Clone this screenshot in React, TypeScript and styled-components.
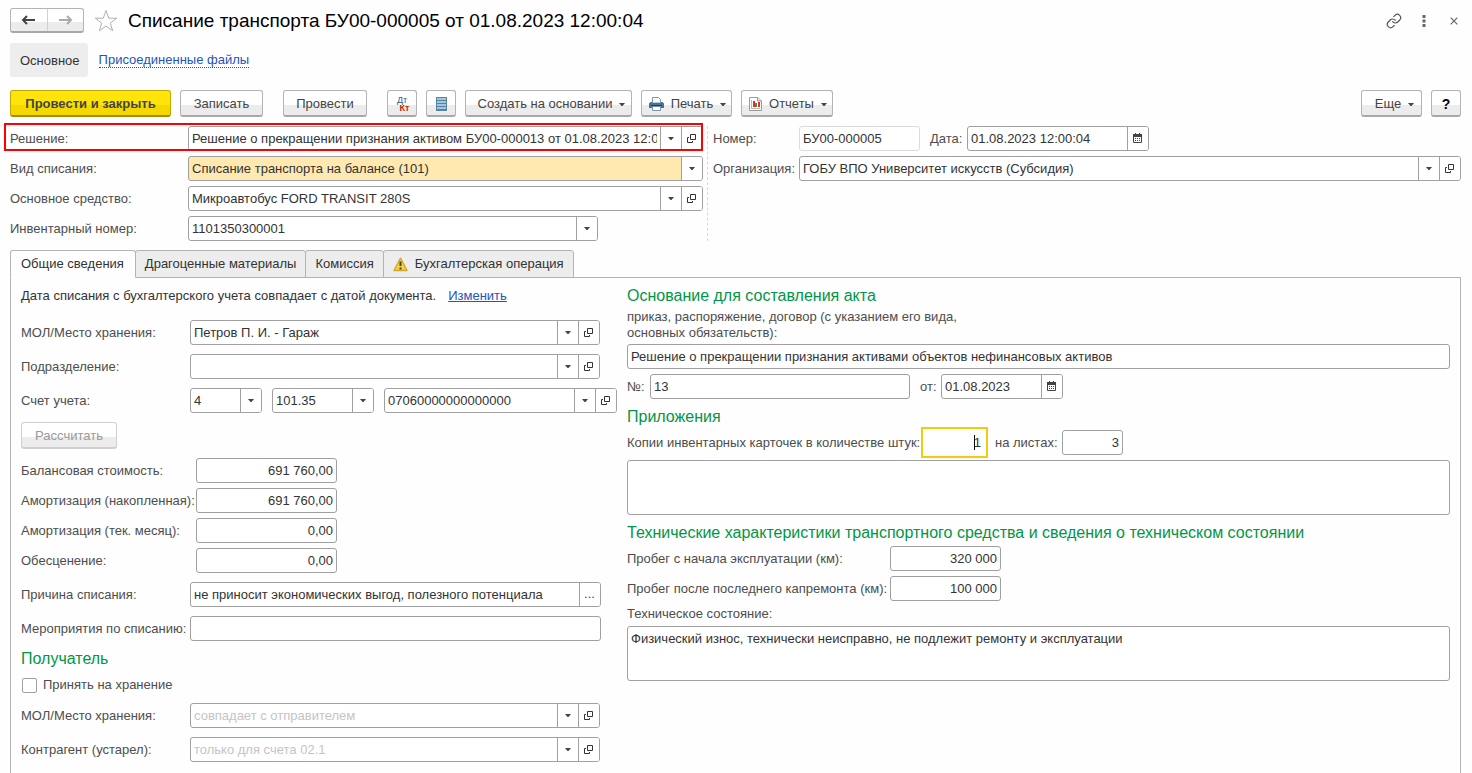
import React from "react";
import styled, { createGlobalStyle, css } from "styled-components";

const GlobalStyle = createGlobalStyle`
  * { box-sizing: border-box; }
  body {
    margin: 0;
    background: #fefefe;
    color: #4d4d4d;
    font: 13px/16px "Liberation Sans", Arial, sans-serif;
  }
  button, input, select, textarea { font: inherit; margin: 0; }
`;

const Page = styled.div`
  display: flex;
  flex-direction: column;
  height: 100vh;
  padding: 8px 11px 0 10px;
  overflow: hidden;
`;

/* ---------- title bar ---------- */

const TitleBar = styled.header`
  display: flex;
  align-items: center;
  height: 25px;
`;

const raised = css`
  border: 1px solid #b3b3b3;
  border-bottom: 2px solid #a8a8a8;
  border-radius: 3px;
  background: linear-gradient(#fff 0 60%, #ececec 60% 100%);
`;

const History = styled.nav`
  ${raised}
  display: flex;
  width: 74px;
  height: 25px;
`;

const HistoryButton = styled.button`
  flex: 1;
  display: flex;
  align-items: center;
  justify-content: center;
  padding: 0;
  border: 0;
  background: none;
  & + & { border-left: 1px solid #d0d0d0; }
`;

const Title = styled.h1`
  flex: 1;
  margin: 0;
  color: #000;
  font-size: 19px;
  line-height: 24px;
  font-weight: 400;
  white-space: nowrap;
`;

const IconButton = styled.button`
  display: flex;
  align-items: center;
  justify-content: center;
  padding: 0;
  border: 0;
  background: none;
`;

const StarButton = styled(IconButton)`
  width: 24px;
  margin: 0 10px;
`;

const WindowActions = styled.div`
  display: flex;
  gap: 10px;
  margin-right: -3px;
  & > button { width: 20px; height: 20px; }
`;

/* ---------- page links ---------- */

const Sections = styled.nav`
  display: flex;
  align-items: center;
  gap: 11px;
  height: 34px;
  margin-top: 10px;
`;

const CurrentSection = styled.span`
  padding: 10px 8px 8px 10px;
  border-radius: 3px;
  background: #ededed;
  color: #333;
`;

const Link = styled.a`
  color: #2454b8;
  text-decoration: underline;
`;

const SectionLink = styled(Link)`
  line-height: 14px;
  text-decoration: none;
  border-bottom: 1px dotted #2454b8;
`;

/* ---------- command bar ---------- */

const Toolbar = styled.div`
  display: flex;
  gap: 9px;
  margin-top: 13px;
`;

const Group = styled.div<{ $end?: boolean }>`
  display: flex;
  gap: 9px;
  margin-right: 11px;
  ${(p) => p.$end && "margin: 0 0 0 auto;"}
`;

const Button = styled.button<{ $primary?: boolean; $menu?: boolean; $width?: number }>`
  ${raised}
  display: flex;
  align-items: center;
  justify-content: center;
  gap: 7px;
  width: ${(p) => (p.$width ? p.$width + "px" : "auto")};
  height: 27px;
  padding: ${(p) => (p.$menu ? "2px 0 0 6px" : "2px 0 0")};
  color: #444;
  white-space: nowrap;
  &:disabled {
    color: #999;
    border-color: #d0d0d0;
  }
  ${(p) =>
    p.$primary &&
    css`
      border-color: #c0a800;
      border-bottom-color: #a08c00;
      background: linear-gradient(#ffe40a 0 60%, #f5d800 60% 100%);
      font-weight: 700;
    `}
`;

const IconMenuButton = styled(Button)`
  padding-left: 2px;
`;

const HelpButton = styled(Button)`
  color: #000;
  font-size: 14px;
  font-weight: 700;
`;

/* ---------- fields ---------- */

const Label = styled.label<{ $width?: number }>`
  flex: none;
  width: ${(p) => (p.$width ? p.$width + "px" : "auto")};
  white-space: nowrap;
`;

const Frame = styled.div<{ $width?: number; $tint?: boolean; $quiet?: boolean }>`
  display: flex;
  flex: ${(p) => (p.$width ? "none" : "1 1 0")};
  width: ${(p) => (p.$width ? p.$width + "px" : "auto")};
  min-width: 0;
  height: 25px;
  border: 1px solid ${(p) => (p.$quiet ? "#dcdcdc" : "#a0a0a0")};
  border-radius: 3px;
  background: ${(p) => (p.$tint ? "#ffe9b0" : "#fff")};
  overflow: hidden;
`;

const control = css`
  flex: 1 1 0;
  width: 0;
  min-width: 0;
  padding: 0 3px;
  border: 0;
  outline: 0;
  background: none;
  color: #333;
`;

const Input = styled.input<{ $right?: boolean }>`
  ${control}
  text-align: ${(p) => (p.$right ? "right" : "left")};
  &::placeholder { color: #c4c4c4; opacity: 1; }
`;

const Select = styled.select`
  ${control}
  appearance: none;
`;

const cell = css`
  display: flex;
  flex: none;
  align-items: center;
  justify-content: center;
  width: 21px;
  padding: 0 1px 1px 0;
  border: 0;
  border-left: 1px solid #a0a0a0;
  background: #fff;
  color: #444;
`;

const CellButton = styled.button`${cell}`;
const SelectMark = styled.span`
  ${cell}
  pointer-events: none;
`;

const TextArea = styled.textarea`
  display: block;
  width: 100%;
  height: 55px;
  padding: 4px 3px;
  border: 1px solid #a0a0a0;
  border-radius: 3px;
  outline: 0;
  background: #fff;
  color: #333;
  resize: none;
`;

/* ---------- document header ---------- */

const DocHeader = styled.section`
  display: flex;
  margin-top: 9px;
`;

const Column = styled.div<{ $gap: number }>`
  display: flex;
  flex-direction: column;
  gap: ${(p) => p.$gap}px;
`;

const HeaderMain = styled(Column)`
  flex: 0 1 693px;
  min-width: 0;
`;

const HeaderSide = styled(Column)`
  flex: 1 1 0;
  min-width: 0;
  margin-left: 4px;
  padding-left: 5px;
  border-left: 1px dashed #d8d8d8;
`;

const Row = styled.div`
  position: relative;
  display: flex;
  align-items: center;
  height: 25px;
`;

const Highlight = styled.div`
  position: absolute;
  inset: -3px 0 0 -6px;
  border: 2px solid #f00;
  pointer-events: none;
`;

/* ---------- tabs ---------- */

const Tabs = styled.div`
  display: flex;
  margin-top: 9px;
`;

const Tab = styled.button<{ $active?: boolean }>`
  display: flex;
  align-items: center;
  gap: 7px;
  height: 28px;
  margin: 0 0 0 -1px;
  padding: 0 9px;
  border: 1px solid #b3b3b3;
  border-radius: 3px 3px 0 0;
  background: #ededed;
  color: #333;
  white-space: nowrap;
  &:first-child {
    margin-left: 0;
    padding: 0 11px 0 10px;
  }
  ${(p) =>
    p.$active &&
    css`
      position: relative;
      background: #fefefe;
      border-bottom-color: #fefefe;
    `}
`;

const Panel = styled.section`
  display: flex;
  flex: 1 0 auto;
  gap: 10px;
  margin-top: -1px;
  padding: 10px;
  border: 1px solid #b3b3b3;
  border-bottom: 0;
`;

const Left = styled.div`
  flex: none;
  width: 596px;
`;

const Right = styled.div`
  flex: 1 1 0;
  min-width: 0;
`;

const Notice = styled.p`
  display: flex;
  gap: 12px;
  height: 16px;
  margin: 0 0 16px;
  color: #333;
`;

const Heading = styled.h2`
  margin: 0;
  color: #009646;
  font-size: 16px;
  line-height: 16px;
  font-weight: 400;
`;

const Block = styled(Column)<{ $top: number }>`
  margin-top: ${(p) => p.$top}px;
`;

const Calculate = styled.div`
  margin: 9px 0;
`;

const CheckLine = styled.label`
  display: flex;
  align-items: center;
  gap: 6px;
  margin: 10px 1px;
`;

const Checkbox = styled.input`
  appearance: none;
  width: 15px;
  height: 15px;
  border: 1px solid #a0a0a0;
  border-radius: 2px;
  background: #fff;
`;

const Hint = styled.label`
  display: block;
  width: 360px;
  margin: 5px 0 3px;
`;

const StateLabel = styled.label`
  display: block;
  margin: 5px 0 4px;
`;

const ActiveFrame = styled(Frame)`
  position: relative;
  height: 31px;
  padding-right: 2px;
  border: 2px solid #f2cc0c;
  border-radius: 0;
`;

const Caret = styled.span`
  position: absolute;
  top: 6px;
  right: 11px;
  width: 1px;
  height: 15px;
  background: #000;
`;

const Spacer = styled.span<{ $width: number }>`
  flex: none;
  width: ${(p) => p.$width}px;
`;

/* ---------- icons ---------- */

const Triangle = () => (
  <svg width="6" height="3" viewBox="0 0 6 3" aria-hidden="true">
    <path d="M0 0h6L3.500 3h-1z" fill="#444" />
  </svg>
);

const OpenIcon = () => (
  <svg width="11" height="11" viewBox="0 0 11 11" fill="none" stroke="#333" aria-hidden="true">
    <path d="M4.500 1.500h5v5h-5zM3 4.500H1.500v5h5V8" />
  </svg>
);

const CalendarIcon = () => (
  <svg width="10" height="10" viewBox="0 0 10 10" aria-hidden="true">
    <path d="M.5 1.500h8v8h-8z" fill="#fff" stroke="#444" />
    <path d="M0 1h9v3H0zM2 0h1v1H2zM6 0h1v1H6z" fill="#444" />
    <path d="M2 5h1v1H2zM4 5h1v1H4zM6 5h1v1H6zM2 7h1v1H2zM4 7h1v1H4zM6 7h1v1H6z" fill="#444" />
  </svg>
);

const Arrow = ({ back }: { back?: boolean }) => (
  <svg width="15" height="10" viewBox="0 0 15 10" fill="none" stroke={back ? "#444" : "#aaa"} strokeWidth="2" aria-hidden="true">
    <path d={back ? "M14 5H2M6 1L2 5l4 4" : "M1 5h12M9 1l4 4-4 4"} />
  </svg>
);

const Star = () => (
  <svg width="24" height="23" viewBox="0 0 24 23" fill="none" stroke="#b0b0b0" aria-hidden="true">
    <path d="M12 1.500l2.700 7.700h8l-6.400 4.900 2.400 7.700-6.700-4.700-6.700 4.700 2.400-7.700-6.400-4.900h8z" />
  </svg>
);

const LinkIcon = () => (
  <svg width="16" height="16" viewBox="0 0 24 24" fill="none" stroke="#555" strokeWidth="1.800" strokeLinecap="round" aria-hidden="true">
    <path d="M10 13a5 5 0 0 0 7.540.540l3-3a5 5 0 0 0-7.070-7.070l-1.720 1.710" />
    <path d="M14 11a5 5 0 0 0-7.540-.540l-3 3a5 5 0 0 0 7.070 7.070l1.710-1.710" />
  </svg>
);

const DotsIcon = () => (
  <svg width="4" height="12" viewBox="0 0 4 12" fill="#666" aria-hidden="true">
    <path d="M.5 0h3v3h-3zM.5 4.500h3v3h-3zM.5 9h3v3h-3z" />
  </svg>
);

const CloseIcon = () => (
  <svg width="8" height="8" viewBox="0 0 8 8" stroke="#666" strokeWidth="1.200" aria-hidden="true">
    <path d="M.7.700l6.600 6.600M7.300.700L.7 7.300" />
  </svg>
);

const DebitMark = styled.span`
  display: flex;
  flex-direction: column;
  width: 15px;
  font-size: 9px;
  line-height: 8px;
  color: #1f618f;
  & > b { align-self: flex-end; color: #c81e0a; }
`;

const ListIcon = () => (
  <svg width="11" height="14" viewBox="0 0 11 14" aria-hidden="true">
    <path d="M0 0h11v14H0z" fill="#5583a0" />
    <path d="M1 1h9v2H1zM1 4h9v2H1zM1 7h9v2H1zM1 10h9v2H1z" fill="#a3c6dc" />
  </svg>
);

const PrinterIcon = () => (
  <svg width="15" height="14" viewBox="0 0 15 14" aria-hidden="true">
    <path d="M3.500.5h6l2 2V6h-8z" fill="#fff" stroke="#7d95a8" />
    <path d="M1.500 5H3v1h9V5h1.500L15 6.500V11H0V6.500z" fill="#47729c" />
    <path d="M2 8h11v1H2z" fill="#1f3d5c" />
    <path d="M3.500 9.500h8v4h-8z" fill="#fff" stroke="#7d95a8" />
  </svg>
);

const ReportIcon = () => (
  <svg width="13" height="14" viewBox="0 0 13 14" aria-hidden="true">
    <path d="M.5.5h8.500l3.500 3.500v9.500H.5z" fill="#fff" stroke="#9a9a9a" />
    <path d="M8.500.5V4h4" fill="#ddd" stroke="#9a9a9a" />
    <path d="M2 3h1v8h8v1H2z" fill="#bbb" />
    <path d="M4 4h2v6H4z" fill="#e03020" />
    <path d="M6 6h2v4H6z" fill="#2c9a3c" />
    <path d="M9 5h2v5H9z" fill="#e03020" />
  </svg>
);

const WarningIcon = () => (
  <svg width="15" height="15" viewBox="0 0 15 15" aria-hidden="true">
    <path d="M7.500 1L14 13.500H1z" fill="#f8d040" stroke="#d4a72c" strokeLinejoin="round" strokeWidth="1.400" />
    <path d="M6.500 4.500h2V9h-2zM6.500 10.500h2v2h-2z" fill="#444" />
  </svg>
);

/* ---------- field composites ---------- */

type FieldProps = {
  id: string;
  value?: string;
  placeholder?: string;
  width?: number;
  open?: boolean;
};

const Combo = ({ id, value = "", placeholder, width, open }: FieldProps) => (
  <Frame $width={width}>
    <Input id={id} defaultValue={value} placeholder={placeholder} />
    <CellButton type="button" aria-label="Выбрать из списка"><Triangle /></CellButton>
    {open && <CellButton type="button" aria-label="Открыть"><OpenIcon /></CellButton>}
  </Frame>
);

const Choice = ({ id, value, width, tint, label }: FieldProps & { tint?: boolean; label?: string }) => (
  <Frame $width={width} $tint={tint}>
    <Select id={id} defaultValue={value} aria-label={label}>
      <option>{value}</option>
    </Select>
    <SelectMark><Triangle /></SelectMark>
  </Frame>
);

const DateField = ({ id, value, width }: FieldProps) => (
  <Frame $width={width}>
    <Input id={id} defaultValue={value} />
    <CellButton type="button" aria-label="Календарь"><CalendarIcon /></CellButton>
  </Frame>
);

const NumberField = ({ id, value, width }: FieldProps) => (
  <Frame $width={width}>
    <Input id={id} defaultValue={value} $right />
  </Frame>
);

const amounts = [
  ["balance", "Балансовая стоимость:", "691 760,00"],
  ["depreciation", "Амортизация (накопленная):", "691 760,00"],
  ["depreciation-month", "Амортизация (тек. месяц):", "0,00"],
  ["impairment", "Обесценение:", "0,00"],
];

export default function App() {
  return (
    <Page>
      <GlobalStyle />
      <TitleBar>
        <History>
          <HistoryButton type="button" aria-label="Назад"><Arrow back /></HistoryButton>
          <HistoryButton type="button" aria-label="Вперед"><Arrow /></HistoryButton>
        </History>
        <StarButton type="button" aria-label="Избранное"><Star /></StarButton>
        <Title>Списание транспорта БУ00-000005 от 01.08.2023 12:00:04</Title>
        <WindowActions>
          <IconButton type="button" aria-label="Ссылка"><LinkIcon /></IconButton>
          <IconButton type="button" aria-label="Меню"><DotsIcon /></IconButton>
          <IconButton type="button" aria-label="Закрыть"><CloseIcon /></IconButton>
        </WindowActions>
      </TitleBar>

      <Sections>
        <CurrentSection>Основное</CurrentSection>
        <SectionLink href="#files">Присоединенные файлы</SectionLink>
      </Sections>

      <Toolbar>
        <Group>
          <Button type="button" $primary $width={161}>Провести и закрыть</Button>
          <Button type="button" $width={83}>Записать</Button>
        </Group>
        <Group>
          <Button type="button" $width={84}>Провести</Button>
        </Group>
        <Button type="button" $width={30} aria-label="Проводки">
          <DebitMark>Дт<b>Кт</b></DebitMark>
        </Button>
        <Button type="button" $width={30} aria-label="Список"><ListIcon /></Button>
        <Button type="button" $menu $width={167}>Создать на основании<Triangle /></Button>
        <IconMenuButton type="button" $width={91}><PrinterIcon />Печать<Triangle /></IconMenuButton>
        <IconMenuButton type="button" $width={92}><ReportIcon />Отчеты<Triangle /></IconMenuButton>
        <Group $end>
          <Button type="button" $menu $width={61}>Еще<Triangle /></Button>
          <HelpButton type="button" $width={30}>?</HelpButton>
        </Group>
      </Toolbar>

      <DocHeader>
        <HeaderMain $gap={5}>
          <Row>
            <Label htmlFor="decision" $width={178}>Решение:</Label>
            <Combo id="decision" value="Решение о прекращении признания активом БУ00-000013 от 01.08.2023 12:00:00" open />
            <Highlight />
          </Row>
          <Row>
            <Label htmlFor="kind" $width={178}>Вид списания:</Label>
            <Choice id="kind" value="Списание транспорта на балансе (101)" tint />
          </Row>
          <Row>
            <Label htmlFor="asset" $width={178}>Основное средство:</Label>
            <Combo id="asset" value="Микроавтобус FORD TRANSIT 280S" open />
          </Row>
          <Row>
            <Label htmlFor="inventory" $width={178}>Инвентарный номер:</Label>
            <Combo id="inventory" value="1101350300001" width={410} />
          </Row>
        </HeaderMain>
        <HeaderSide $gap={5}>
          <Row>
            <Label htmlFor="number" $width={86}>Номер:</Label>
            <Frame $width={121} $quiet><Input id="number" defaultValue="БУ00-000005" readOnly /></Frame>
            <Spacer $width={10} />
            <Label htmlFor="date" $width={37}>Дата:</Label>
            <DateField id="date" value="01.08.2023 12:00:04" width={182} />
          </Row>
          <Row>
            <Label htmlFor="org" $width={86}>Организация:</Label>
            <Combo id="org" value="ГОБУ ВПО Университет искусств (Субсидия)" open />
          </Row>
        </HeaderSide>
      </DocHeader>

      <Tabs role="tablist">
        <Tab type="button" role="tab" aria-selected $active>Общие сведения</Tab>
        <Tab type="button" role="tab">Драгоценные материалы</Tab>
        <Tab type="button" role="tab">Комиссия</Tab>
        <Tab type="button" role="tab"><WarningIcon />Бухгалтерская операция</Tab>
      </Tabs>

      <Panel>
        <Left>
          <Notice>
            Дата списания с бухгалтерского учета совпадает с датой документа.
            <Link href="#change">Изменить</Link>
          </Notice>
          <Column $gap={9}>
            <Row>
              <Label htmlFor="keeper" $width={169}>МОЛ/Место хранения:</Label>
              <Combo id="keeper" value="Петров П. И. - Гараж" width={410} open />
            </Row>
            <Row>
              <Label htmlFor="department" $width={169}>Подразделение:</Label>
              <Combo id="department" width={410} open />
            </Row>
            <Row>
              <Label htmlFor="account-kind" $width={169}>Счет учета:</Label>
              <Choice id="account-kind" value="4" width={72} />
              <Spacer $width={10} />
              <Choice id="account" value="101.35" width={102} label="Счет" />
              <Spacer $width={10} />
              <Combo id="classifier" value="07060000000000000" width={233} open />
            </Row>
          </Column>
          <Calculate>
            <Button type="button" disabled $width={96}>Рассчитать</Button>
          </Calculate>
          <Column $gap={5}>
            {amounts.map(([id, label, value]) => (
              <Row key={id}>
                <Label htmlFor={id} $width={175}>{label}</Label>
                <NumberField id={id} value={value} width={141} />
              </Row>
            ))}
          </Column>
          <Block $gap={9} $top={9}>
            <Row>
              <Label htmlFor="reason" $width={169}>Причина списания:</Label>
              <Frame $width={411}>
                <Input id="reason" defaultValue="не приносит экономических выгод, полезного потенциала" />
                <CellButton type="button" aria-label="Подробнее">...</CellButton>
              </Frame>
            </Row>
            <Row>
              <Label htmlFor="measures" $width={169}>Мероприятия по списанию:</Label>
              <Frame $width={411}><Input id="measures" /></Frame>
            </Row>
          </Block>
          <Block $gap={0} $top={10}>
            <Heading>Получатель</Heading>
            <CheckLine><Checkbox type="checkbox" />Принять на хранение</CheckLine>
          </Block>
          <Column $gap={9}>
            <Row>
              <Label htmlFor="receiver" $width={169}>МОЛ/Место хранения:</Label>
              <Combo id="receiver" placeholder="совпадает с отправителем" width={410} open />
            </Row>
            <Row>
              <Label htmlFor="partner" $width={169}>Контрагент (устарел):</Label>
              <Combo id="partner" placeholder="только для счета 02.1" width={410} open />
            </Row>
          </Column>
        </Left>

        <Right>
          <Heading>Основание для составления акта</Heading>
          <Hint htmlFor="basis">приказ, распоряжение, договор (с указанием его вида, основных обязательств):</Hint>
          <Column $gap={5}>
            <Row><Frame><Input id="basis" defaultValue="Решение о прекращении признания активами объектов нефинансовых активов" /></Frame></Row>
            <Row>
              <Label htmlFor="basis-number" $width={23}>№:</Label>
              <Frame $width={260}><Input id="basis-number" defaultValue="13" /></Frame>
              <Spacer $width={10} />
              <Label htmlFor="basis-date" $width={21}>от:</Label>
              <DateField id="basis-date" value="01.08.2023" width={122} />
            </Row>
          </Column>
          <Block $gap={5} $top={10}>
            <Heading>Приложения</Heading>
            <Row>
              <Label htmlFor="copies" $width={294}>Копии инвентарных карточек в количестве штук:</Label>
              <ActiveFrame $width={67}>
                <Input id="copies" defaultValue="1" $right />
                <Caret />
              </ActiveFrame>
              <Spacer $width={7} />
              <Label htmlFor="sheets" $width={67}>на листах:</Label>
              <NumberField id="sheets" value="3" width={61} />
            </Row>
            <TextArea aria-label="Приложения" />
          </Block>
          <Block $gap={5} $top={10}>
            <Heading>Технические характеристики транспортного средства и сведения о техническом состоянии</Heading>
            <Row>
              <Label htmlFor="mileage" $width={263}>Пробег с начала эксплуатации (км):</Label>
              <NumberField id="mileage" value="320 000" width={111} />
            </Row>
            <Row>
              <Label htmlFor="mileage-repair" $width={263}>Пробег после последнего капремонта (км):</Label>
              <NumberField id="mileage-repair" value="100 000" width={111} />
            </Row>
          </Block>
          <StateLabel htmlFor="state">Техническое состояние:</StateLabel>
          <TextArea id="state" defaultValue="Физический износ, технически неисправно, не подлежит ремонту и эксплуатации" />
        </Right>
      </Panel>
    </Page>
  );
}
